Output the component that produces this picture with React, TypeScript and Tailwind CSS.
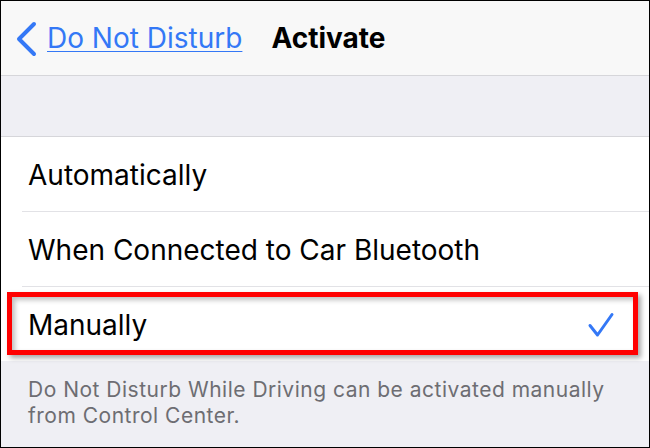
const rows = ['Automatically', 'When Connected to Car Bluetooth'];

export default function App() {
	return (
		<div
			className="w-[650px] h-[448px] border border-black overflow-hidden bg-[#efeff4] flex flex-col"
			style={{ fontFamily: 'Inter, "Noto Sans", sans-serif' }}
		>
			{/* nav bar */}
			<div className="h-[75px] shrink-0 bg-[#f8f8f8] border-b border-[#d6d6da] flex items-center">
				<svg className="ml-[14px] mt-[1px]" width="22" height="36" viewBox="0 0 22 36" fill="none">
					<path
						d="M19 3 L4 18 L19 33"
						stroke="#3478f6"
						strokeWidth="4"
						strokeLinecap="round"
						strokeLinejoin="round"
					/>
				</svg>
				<a className="ml-[10px] text-[28px] text-[#3478f6] underline underline-offset-[3px] decoration-1 leading-none">
					Do Not Disturb
				</a>
				<span className="ml-[29px] text-[28px] font-bold text-black leading-none">Activate</span>
			</div>

			{/* spacer section */}
			<div className="h-[61px] shrink-0 border-b border-[#d6d6da]" />

			{/* options */}
			<div className="bg-white shrink-0">
				{rows.map((label) => (
					<div key={label} className="pl-[21px]">
						<div className="h-[75px] border-b border-[#e2e2e6] flex items-center pl-[6px] pt-[2px] text-[28px] text-black">
							{label}
						</div>
					</div>
				))}
				<div className="relative h-[74px] flex items-center pl-[27px] pr-[34px] text-[28px] text-black">
					<span className="flex-1 pt-[2px]">Manually</span>
					<svg width="28" height="28" viewBox="0 0 28 28" fill="none" className="mt-[2px]">
						<path
							d="M3 14.5 L10.5 24 L25 3.5"
							stroke="#3478f6"
							strokeWidth="3"
							strokeLinecap="round"
							strokeLinejoin="round"
						/>
					</svg>
					<div className="absolute left-[6px] top-[5px] w-[631px] h-[63px] border-[5px] border-[#ff0000] shadow-[3px_3px_5px_rgba(0,0,0,0.35),inset_3px_3px_5px_rgba(0,0,0,0.25)]" />
				</div>
			</div>

			{/* footer note */}
			<p className="pl-[27px] pr-[20px] pt-[16px] text-[21px] tracking-[0.5px] leading-[26px] text-[#6d6d72]">
				Do Not Disturb While Driving can be activated manually from Control Center.
			</p>
		</div>
	);
}
